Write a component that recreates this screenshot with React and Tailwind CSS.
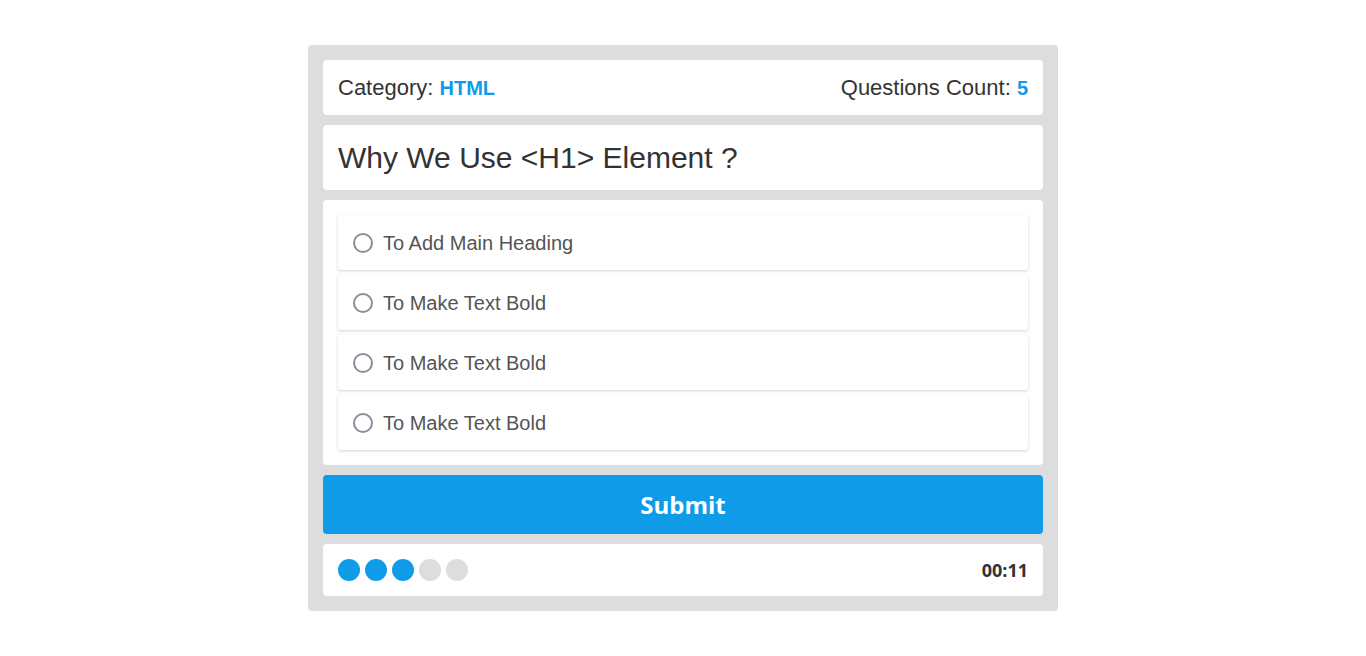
import React, { useState } from 'react';

const answers = [
  'To Add Main Heading',
  'To Make Text Bold',
  'To Make Text Bold',
  'To Make Text Bold',
];

const App = () => {
  const [picked, setPicked] = useState(null);
  const done = 3;

  return (
    <div className="min-h-screen bg-white pt-[45px] font-['Liberation_Sans',Arial,sans-serif]">
      <div className="mx-auto w-[750px] rounded-[4px] bg-[#dddddd] p-[15px]">
        {/* Info */}
        <div className="flex h-[55px] items-center justify-between rounded-[4px] bg-white px-[15px] text-[22px] text-[#333]">
          <div>
            Category: <span className="text-[20px] font-bold text-[#0f9be8]">HTML</span>
          </div>
          <div>
            Questions Count: <span className="text-[20px] font-bold text-[#0f9be8]">5</span>
          </div>
        </div>

        {/* Question */}
        <div className="mt-[10px] flex h-[65px] items-center rounded-[4px] bg-white px-[15px]">
          <h2 className="text-[30px] text-[#333]">Why We Use &lt;H1&gt; Element ?</h2>
        </div>

        {/* Answers */}
        <div className="mt-[10px] flex flex-col gap-[5px] rounded-[4px] bg-white p-[15px]">
          {answers.map((a, i) => (
            <label
              key={i}
              className="flex h-[55px] cursor-pointer items-center gap-[10px] rounded-[2px] bg-white px-[15px] shadow-[0_1px_3px_rgba(0,0,0,0.18)]"
            >
              <span className="flex h-[20px] w-[20px] items-center justify-center rounded-full border-2 border-[#8f8c9a]">
                {picked === i && <span className="h-[10px] w-[10px] rounded-full bg-[#0f9be8]" />}
              </span>
              <input
                type="radio"
                name="question"
                className="hidden"
                checked={picked === i}
                onChange={() => setPicked(i)}
              />
              <span className="text-[20px] text-[#555]">{a}</span>
            </label>
          ))}
        </div>

        {/* Submit */}
        <button className="mt-[10px] block h-[59px] w-full rounded-[4px] bg-[#0f9be8] font-['Open_Sans',sans-serif] text-[24px] font-bold text-white">
          Submit
        </button>

        {/* Footer */}
        <div className="mt-[10px] flex h-[52px] items-center justify-between rounded-[4px] bg-white px-[15px]">
          <div className="flex gap-[5px]">
            {[0, 1, 2, 3, 4].map((n) => (
              <span
                key={n}
                className={n < done ? 'h-[22px] w-[22px] rounded-full bg-[#0f9be8]' : 'h-[22px] w-[22px] rounded-full bg-[#dddddd]'}
              />
            ))}
          </div>
          <div className="font-['Open_Sans',sans-serif] text-[18px] font-bold text-[#333]">00:11</div>
        </div>
      </div>
    </div>
  );
};

export default App;
